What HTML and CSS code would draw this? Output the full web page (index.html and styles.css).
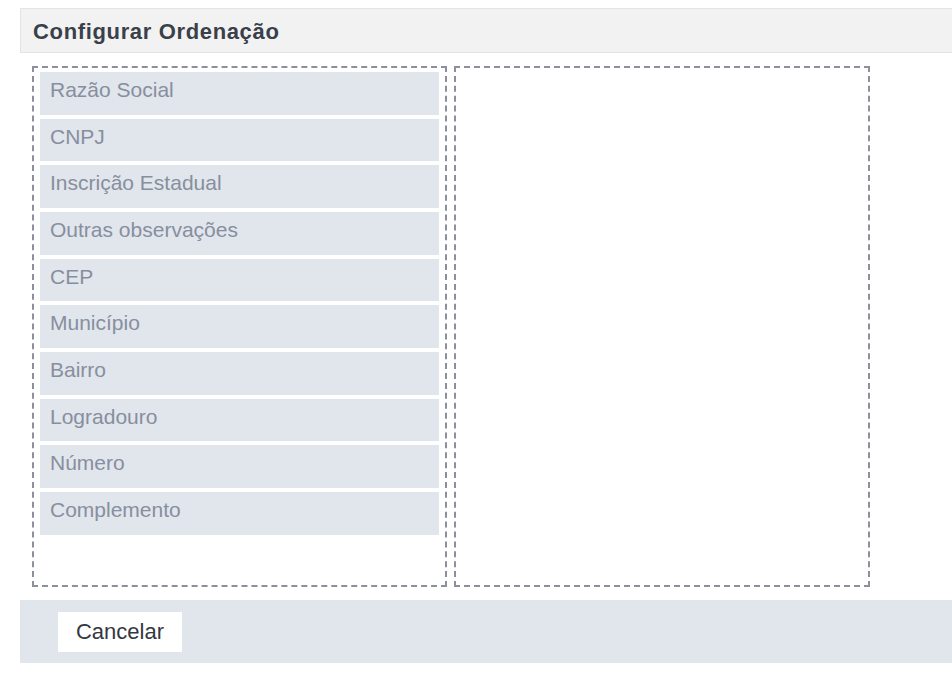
FILE: index.html
```html
<!DOCTYPE html>
<html lang="pt-BR">
<head>
<meta charset="utf-8">
<title>Configurar Ordenação</title>
<link rel="stylesheet" href="styles.css">
</head>
<body>
<div class="dialog">
  <div class="dialog-header">
    <h1 class="dialog-title">Configurar Ordenação</h1>
  </div>
  <div class="columns">
    <ul class="dropzone source">
      <li class="field">Razão Social</li>
      <li class="field">CNPJ</li>
      <li class="field">Inscrição Estadual</li>
      <li class="field">Outras observações</li>
      <li class="field">CEP</li>
      <li class="field">Município</li>
      <li class="field">Bairro</li>
      <li class="field">Logradouro</li>
      <li class="field">Número</li>
      <li class="field">Complemento</li>
    </ul>
    <ul class="dropzone target"></ul>
  </div>
  <div class="dialog-footer">
    <button class="btn-cancel" type="button">Cancelar</button>
  </div>
</div>
</body>
</html>
```

FILE: styles.css
```css
html, body {
  margin: 0;
  padding: 0;
  background: #ffffff;
  overflow: hidden;
}

body {
  font-family: "Liberation Sans", Arial, Helvetica, sans-serif;
}

.dialog {
  padding: 8px 0 0 20px;
}

.dialog-header {
  background: #f2f2f3;
  border: 1px solid #e3e4e7;
  border-right: none;
  height: 43px;
  box-sizing: content-box;
}

.dialog-title {
  margin: 0;
  padding: 11px 0 0 12px;
  font-size: 22px;
  line-height: 24px;
  font-weight: bold;
  letter-spacing: 0.65px;
  color: #3a3f4a;
}

.columns {
  display: flex;
  gap: 7px;
  margin: 13px 0 0 12px;
}

.dropzone {
  list-style: none;
  margin: 0;
  box-sizing: border-box;
  width: 415px;
  height: 521px;
  border: 2px dashed #8b909c;
  padding: 4px 6px 0 6px;
  display: flex;
  flex-direction: column;
  gap: 4px;
}

.target {
  width: 416px;
}

.field {
  box-sizing: border-box;
  height: 42.67px;
  flex: none;
  background: #e1e5ec;
  color: #878f9e;
  font-size: 21px;
  line-height: 24px;
  padding: 6px 0 0 10px;
}

.dialog-footer {
  margin-top: 13px;
  background: #e1e5ec;
  height: 63px;
  box-sizing: border-box;
  padding: 12px 0 0 38px;
}

.btn-cancel {
  background: #ffffff;
  border: none;
  margin: 0;
  height: 40px;
  width: 124px;
  padding: 0;
  font-family: "Liberation Sans", Arial, Helvetica, sans-serif;
  font-size: 22px;
  line-height: 40px;
  color: #333842;
  cursor: pointer;
}
```
